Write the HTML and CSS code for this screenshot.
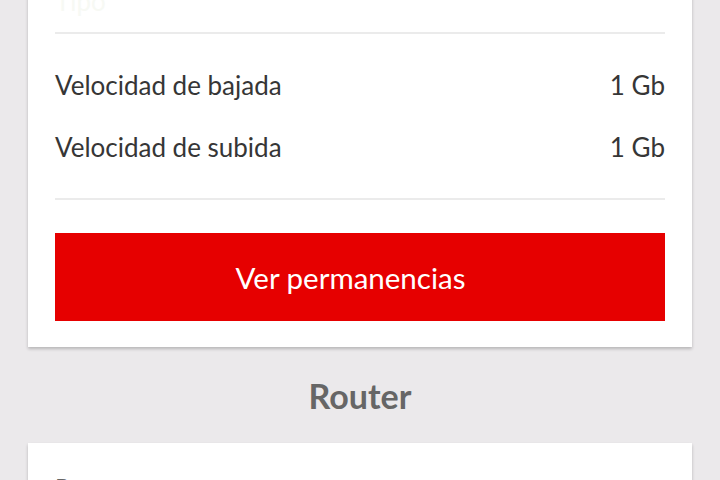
FILE: index.html
```html
<!DOCTYPE html>
<html lang="es">
<head>
<meta charset="utf-8">
<title>Detalle de línea</title>
<link rel="stylesheet" href="styles.css">
</head>
<body>
<main class="page">
  <section class="card card-speed">
    <div class="row row-faded"><span>Tipo</span></div>
    <hr class="divider">
    <div class="rows">
      <div class="row"><span>Velocidad de bajada</span><span>1 Gb</span></div>
      <div class="row"><span>Velocidad de subida</span><span>1 Gb</span></div>
    </div>
    <hr class="divider">
    <button class="btn-primary" type="button">Ver permanencias</button>
  </section>
  <h2 class="section-title">Router</h2>
  <section class="card card-router">
    <div class="row row-muted"><span>Router</span></div>
  </section>
</main>
</body>
</html>
```

FILE: styles.css
```css
html, body {
  margin: 0;
  padding: 0;
  background: #ebe9eb;
  overflow: hidden;
}

body {
  font-family: "Lato", "Noto Sans", sans-serif;
  color: #363636;
}

.page {
  padding: 0 28px;
  margin-top: -30px;
}

.card {
  background: #ffffff;
  box-shadow: 0 2px 3px rgba(0, 0, 0, 0.22);
  padding: 0 27px;
}

.card-speed {
  padding-bottom: 26px;
}

.row {
  display: flex;
  justify-content: space-between;
  align-items: center;
  height: 62px;
  font-size: 26px;
}

.row-faded {
  color: #f7f9f4;
}

.rows {
  padding: 20px 0 20px;
}

.divider {
  border: 0;
  height: 2px;
  margin: 0;
  background: #ebebeb;
}

.btn-primary {
  display: block;
  width: 100%;
  height: 88px;
  margin-top: 33px;
  padding: 0 19px 0 0;
  border: 0;
  background: #e60000;
  color: #ffffff;
  font-family: inherit;
  font-size: 29.5px;
  cursor: pointer;
}

.section-title {
  margin: 0;
  padding: 29px 0 27px;
  text-align: center;
  font-size: 34px;
  line-height: 40px;
  font-weight: 700;
  color: #666666;
}

.card-router {
  padding-top: 12px;
  height: 80px;
}

.row-muted {
  color: #666666;
  font-size: 24px;
}
```
